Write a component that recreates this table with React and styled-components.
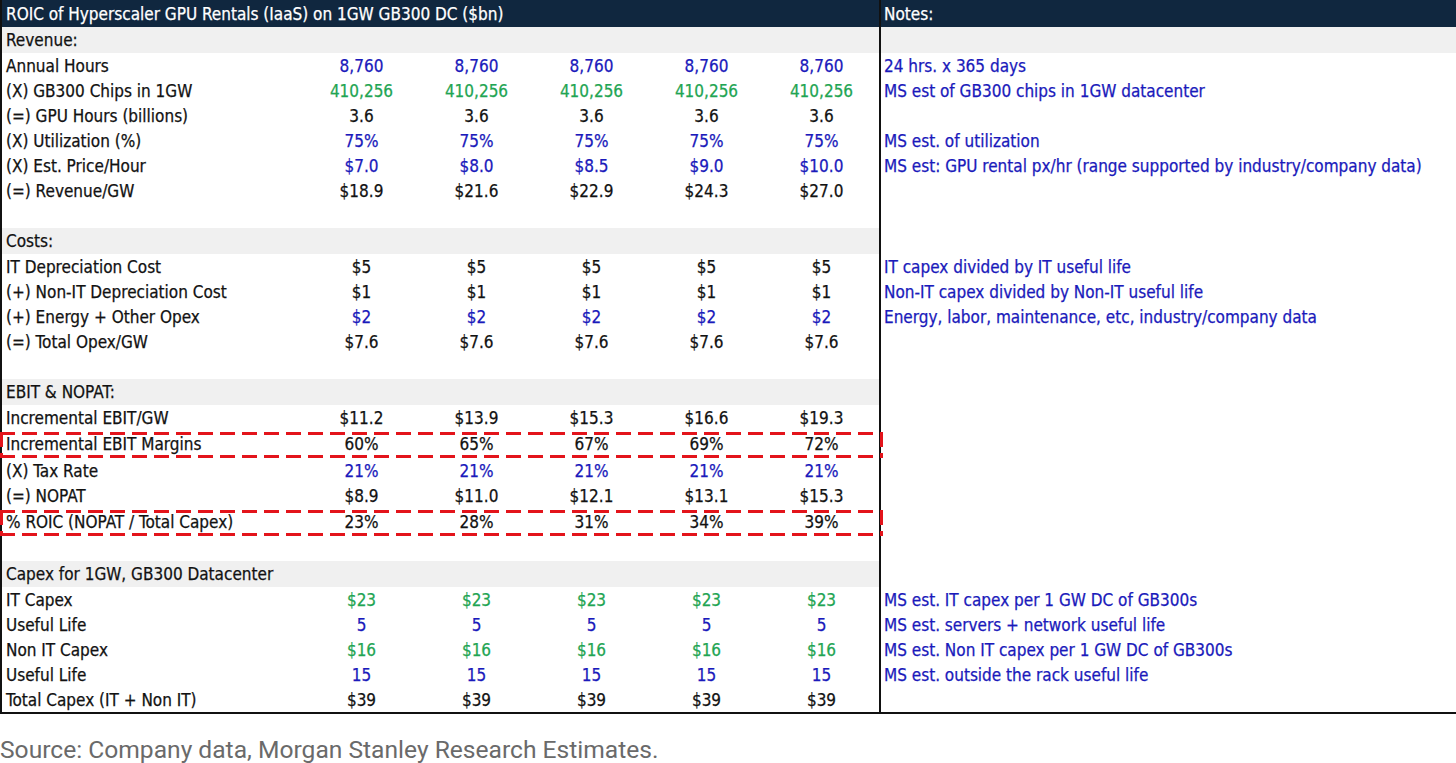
import React from "react";
import styled, { createGlobalStyle, css } from "styled-components";

const GlobalStyle = createGlobalStyle`
  html, body { margin: 0; padding: 0; background: #fff; }
  body { font-family: "Liberation Sans", Arial, sans-serif; }
`;

const C = {
  black: "#121212",
  blue: "#1a1abb",
  green: "#1fa553",
  navy: "#10273f",
  gray: "#f0f0f0",
  red: "#e3141b",
};

const Page = styled.div`
  width: 1456px;
  height: 763px;
  overflow: hidden;
`;

const Table = styled.div`
  display: flex;
  flex-direction: column;
  border-left: 2px solid #111;
  border-bottom: 2px solid #111;
  font-family: "DejaVu Sans Condensed", "DejaVu Sans", sans-serif;
  font-stretch: semi-condensed;
  font-size: 17px;
  -webkit-text-stroke: 0.25px currentColor;
  color: ${C.black};
`;

const Row = styled.div`
  display: flex;
  height: ${(p) => p.$h || 25}px;
  align-items: stretch;
  background: ${(p) => (p.$header ? C.navy : "transparent")};
  color: ${(p) => (p.$header ? "#fff" : C.black)};
`;

const dashedBox = css`
  &::after {
    content: "";
    position: absolute;
    top: 2px;
    bottom: 0;
    left: -2px;
    right: -4px;
    pointer-events: none;
    background:
      repeating-linear-gradient(90deg, ${C.red} 0 15px, transparent 15px 22px) top left / 100% 3px no-repeat,
      repeating-linear-gradient(90deg, ${C.red} 0 15px, transparent 15px 22px) bottom left / 100% 3px no-repeat,
      repeating-linear-gradient(180deg, ${C.red} 0 15px, transparent 15px 21px) top left / 3px 100% no-repeat,
      repeating-linear-gradient(180deg, ${C.red} 0 15px, transparent 15px 21px) top right / 3px 100% no-repeat;
  }
`;

const Main = styled.div`
  position: relative;
  width: 877px;
  flex: none;
  display: grid;
  grid-template-columns: 302px repeat(5, 115px);
  align-items: center;
  background: ${(p) => (p.$gray ? C.gray : "transparent")};
  ${(p) => p.$dashed && dashedBox}
`;

const Title = styled.div`
  grid-column: 1 / -1;
  padding-left: 4px;
  white-space: nowrap;
`;

const Label = styled.div`
  padding-left: 4px;
  white-space: nowrap;
`;

const Value = styled.div`
  text-align: center;
  white-space: nowrap;
  color: ${(p) => C[p.$color] || C.black};
`;

const Notes = styled.div`
  flex: 1;
  border-left: 2px solid #111;
  padding-left: 3px;
  display: flex;
  align-items: center;
  white-space: nowrap;
  color: ${(p) => (p.$header ? "#fff" : C.blue)};
  background: ${(p) => (p.$gray ? C.gray : "transparent")};
`;

const Source = styled.div`
  margin-top: 22px;
  font-family: Roboto, "Liberation Sans", Arial, sans-serif;
  font-size: 24.6px;
  line-height: 28px;
  font-weight: 400;
  color: #6a6a6a;
  white-space: nowrap;
`;

const five = (v) => [v, v, v, v, v];

const rows = [
  { section: "Revenue:", notesGray: true, h: 26 },
  { label: "Annual Hours", vals: five("8,760"), color: "blue", note: "24 hrs. x 365 days" },
  { label: "(X) GB300 Chips in 1GW", vals: five("410,256"), color: "green", note: "MS est of GB300 chips in 1GW datacenter" },
  { label: "(=) GPU Hours (billions)", vals: five("3.6") },
  { label: "(X) Utilization (%)", vals: five("75%"), color: "blue", note: "MS est. of utilization" },
  {
    label: "(X) Est. Price/Hour",
    vals: ["$7.0", "$8.0", "$8.5", "$9.0", "$10.0"],
    color: "blue",
    note: "MS est: GPU rental px/hr (range supported by industry/company data)",
  },
  { label: "(=) Revenue/GW", vals: ["$18.9", "$21.6", "$22.9", "$24.3", "$27.0"] },
  { empty: true },
  { section: "Costs:", h: 26 },
  { label: "IT Depreciation Cost", vals: five("$5"), note: "IT capex divided by IT useful life" },
  { label: "(+) Non-IT Depreciation Cost", vals: five("$1"), note: "Non-IT capex divided by Non-IT useful life" },
  { label: "(+) Energy + Other Opex", vals: five("$2"), color: "blue", note: "Energy, labor, maintenance, etc, industry/company data" },
  { label: "(=) Total Opex/GW", vals: five("$7.6") },
  { empty: true },
  { section: "EBIT & NOPAT:", h: 26 },
  { label: "Incremental EBIT/GW", vals: ["$11.2", "$13.9", "$15.3", "$16.6", "$19.3"] },
  { label: "Incremental EBIT Margins", vals: ["60%", "65%", "67%", "69%", "72%"], dashed: true, h: 28 },
  { label: "(X) Tax Rate", vals: five("21%"), color: "blue" },
  { label: "(=) NOPAT", vals: ["$8.9", "$11.0", "$12.1", "$13.1", "$15.3"] },
  { label: "% ROIC (NOPAT / Total Capex)", vals: ["23%", "28%", "31%", "34%", "39%"], dashed: true, h: 28 },
  { empty: true },
  { section: "Capex for 1GW, GB300 Datacenter", h: 26 },
  { label: "IT Capex", vals: five("$23"), color: "green", note: "MS est. IT capex per 1 GW DC of GB300s" },
  { label: "Useful Life", vals: five("5"), color: "blue", note: "MS est. servers + network useful life" },
  { label: "Non IT Capex", vals: five("$16"), color: "green", note: "MS est. Non IT capex per 1 GW DC of GB300s" },
  { label: "Useful Life", vals: five("15"), color: "blue", note: "MS est. outside the rack useful life" },
  { label: "Total Capex (IT + Non IT)", vals: five("$39") },
];

export default function App() {
  return (
    <Page>
      <GlobalStyle />
      <Table>
        <Row $header $h={27}>
          <Main>
            <Title>ROIC of Hyperscaler GPU Rentals (IaaS) on 1GW GB300 DC ($bn)</Title>
          </Main>
          <Notes $header>Notes:</Notes>
        </Row>
        {rows.map((r, i) => {
          if (r.empty) {
            return (
              <Row key={i}>
                <Main />
                <Notes />
              </Row>
            );
          }
          if (r.section) {
            return (
              <Row key={i} $h={r.h}>
                <Main $gray>
                  <Label>{r.section}</Label>
                </Main>
                <Notes $gray={r.notesGray} />
              </Row>
            );
          }
          return (
            <Row key={i} $h={r.h}>
              <Main $dashed={r.dashed}>
                <Label>{r.label}</Label>
                {r.vals.map((v, j) => (
                  <Value key={j} $color={r.color}>
                    {v}
                  </Value>
                ))}
              </Main>
              <Notes>{r.note || ""}</Notes>
            </Row>
          );
        })}
      </Table>
      <Source>Source: Company data, Morgan Stanley Research Estimates.</Source>
    </Page>
  );
}
